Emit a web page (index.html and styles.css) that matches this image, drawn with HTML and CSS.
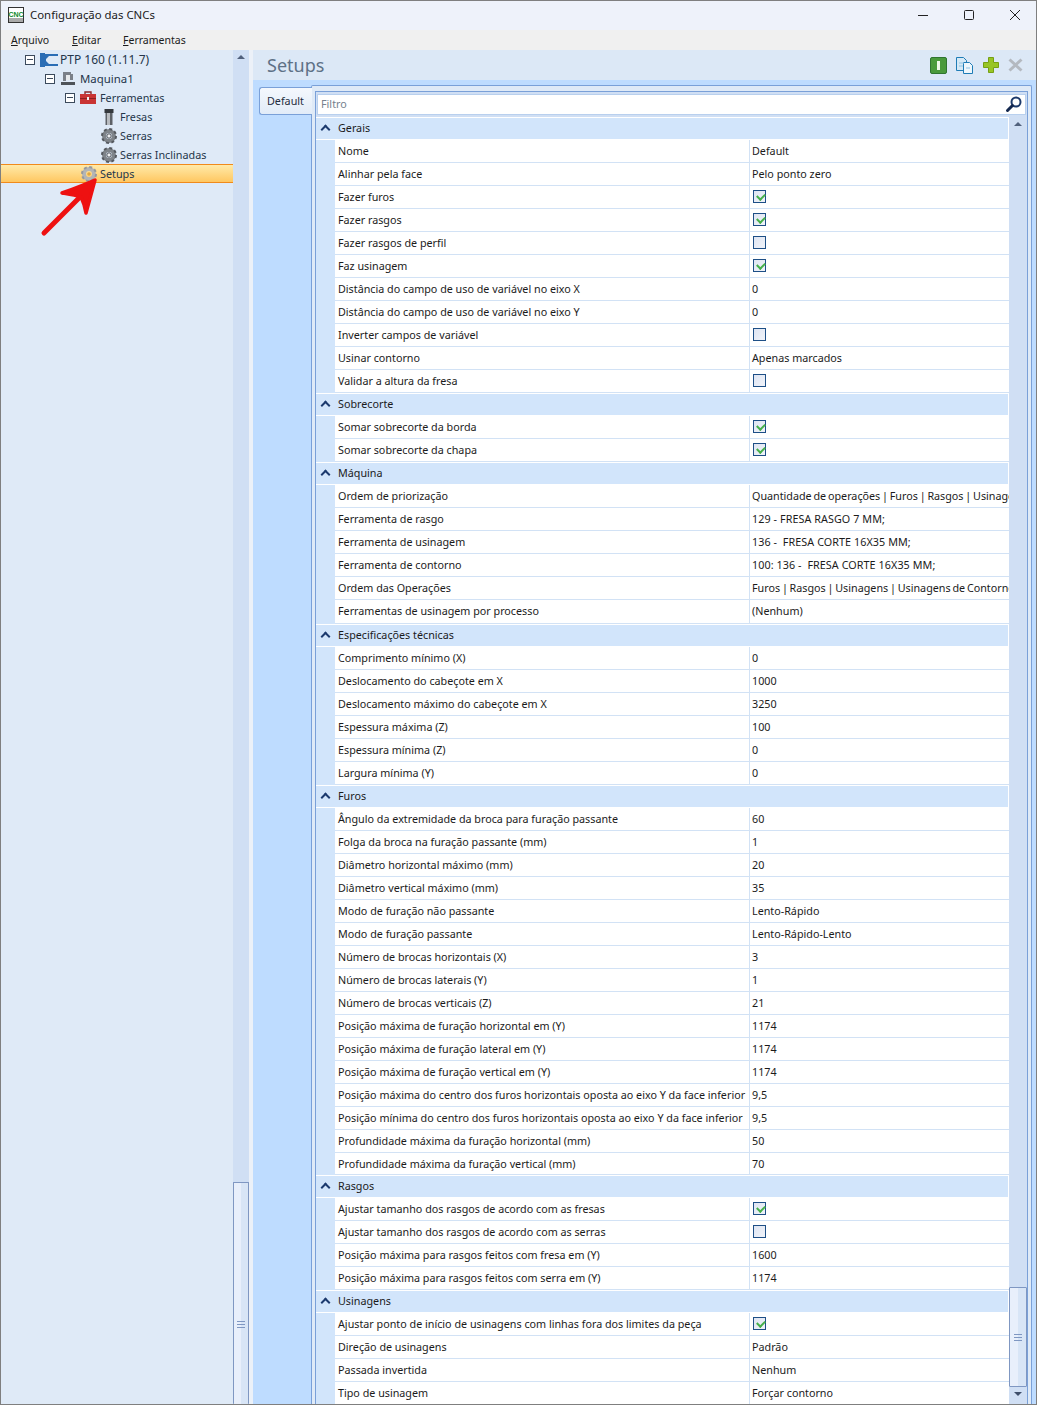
FILE: index.html
```html
<!DOCTYPE html>
<html lang="pt">
<head>
<meta charset="utf-8">
<title>Configuração das CNCs</title>
<link rel="stylesheet" href="styles.css">
</head>
<body>
<div class="window">
  <header class="titlebar">
    <svg class="app-icon" width="16" height="16" viewBox="0 0 16 16"><rect x=".5" y=".5" width="15" height="15" fill="#fff" stroke="#333"/><rect x="1" y="11" width="14" height="4" fill="#aaa"/><text x="8" y="10" text-anchor="middle" class="app-icon-text">CNC</text></svg>
    <span class="title">Configuração das CNCs</span>
    <div class="winctl">
      <svg width="12" height="12" viewBox="0 0 12 12"><path d="M1 6.5h10" stroke="#222" fill="none"/></svg>
      <svg width="12" height="12" viewBox="0 0 12 12"><rect x="1.5" y="1.5" width="9" height="9" rx="1" stroke="#222" fill="none"/></svg>
      <svg width="12" height="12" viewBox="0 0 12 12"><path d="M1 1l10 10M11 1L1 11" stroke="#222" fill="none"/></svg>
    </div>
  </header>
  <nav class="menubar">
    <span class="menu"><u>A</u>rquivo</span>
    <span class="menu"><u>E</u>ditar</span>
    <span class="menu"><u>F</u>erramentas</span>
  </nav>
  <div class="main">
    <aside class="tree">
      <div class="node lv1"><span class="exp"></span>
        <svg class="ico" width="18" height="14" viewBox="0 0 18 14"><path d="M0 0h5v14H0z" fill="#2a6db5"/><path d="M5 1h13v2H9L6 6v2l3 3h9v2H5z" fill="#2a6db5"/></svg>
        <span class="lbl">PTP 160 (1.11.7)</span></div>
      <div class="node lv2"><span class="exp"></span>
        <svg class="ico" width="16" height="16" viewBox="0 0 16 16"><path d="M3 1h8v2h2v6h-3V4H6v6H3z" fill="#7b8088"/><path d="M1 11h14v3H1z" fill="#4d5258"/><path d="M6 4h4v5H6z" fill="#e8eaec"/></svg>
        <span class="lbl">Maquina1</span></div>
      <div class="node lv3"><span class="exp"></span>
        <svg class="ico" width="16" height="14" viewBox="0 0 16 14"><path d="M5 3V1h6v2" fill="none" stroke="#8b2a2a" stroke-width="1.4"/><path d="M0 3h16v10H0z" fill="#c93434"/><path d="M0 7h16v1H0z" fill="#8e1f1f"/><path d="M7 6h2v3H7z" fill="#eee"/></svg>
        <span class="lbl">Ferramentas</span></div>
      <div class="node lv4">
        <svg class="ico" width="16" height="16" viewBox="0 0 16 16"><path d="M3.500 0h9v4h-9z" fill="#35393d"/><path d="M4.500 4h7v12h-7z" fill="#5d6166"/><path d="M6 4h3v12H6z" fill="#b9bcc0"/></svg>
        <span class="lbl">Fresas</span></div>
      <div class="node lv4">
        <svg class="ico" width="16" height="16" viewBox="0 0 16 16"><circle cx="8" cy="8" r="5" fill="none" stroke="#7f8489" stroke-width="4"/><circle cx="8" cy="8" r="7" fill="none" stroke="#55595f" stroke-width="2" stroke-dasharray="3 2.5"/><circle cx="8" cy="8" r="2.200" fill="#eef0f2" stroke="#4b4f55"/></svg>
        <span class="lbl">Serras</span></div>
      <div class="node lv4">
        <svg class="ico" width="16" height="16" viewBox="0 0 16 16"><circle cx="8" cy="8" r="5" fill="none" stroke="#7f8489" stroke-width="4"/><circle cx="8" cy="8" r="7" fill="none" stroke="#55595f" stroke-width="2" stroke-dasharray="3 2.5"/><circle cx="8" cy="8" r="2.200" fill="#eef0f2" stroke="#4b4f55"/></svg>
        <span class="lbl">Serras Inclinadas</span></div>
      <div class="node lv3 selected">
        <svg class="ico" width="16" height="16" viewBox="0 0 16 16"><circle cx="8" cy="8" r="5" fill="none" stroke="#b3b5b6" stroke-width="4"/><circle cx="8" cy="8" r="7" fill="none" stroke="#97999c" stroke-width="2" stroke-dasharray="3 2.5"/><circle cx="8" cy="8" r="1.800" fill="#e0a640"/></svg>
        <span class="lbl">Setups</span></div>
    </aside>
    <div class="vscroll tree-scroll">
      <span class="arrow-up"></span>
      <span class="track"></span>
      <div class="thumb tree-thumb"><span class="grip"></span></div>
    </div>
    <div class="splitter"></div>
    <section class="right">
      <div class="head">
        <h1 class="head-title">Setups</h1>
        <div class="tools">
          <svg width="17" height="17" viewBox="0 0 17 17"><rect x=".5" y=".5" width="16" height="16" rx="1.5" fill="#4a9a3c" stroke="#2f7530"/><path d="M7 4h3v9H7z" fill="#eef7ea"/></svg>
          <svg width="18" height="17" viewBox="0 0 18 17"><path d="M.5.5h7l3 3v10H.5z" fill="#d5e9f6" stroke="#1f7cb6"/><path d="M7.5 5.5h6l3 3v8h-9z" fill="#eef7fc" stroke="#1f7cb6"/><path d="M3 6h5M3 9h4M10 11h4" stroke="#8fc2e2"/></svg>
          <svg width="16" height="16" viewBox="0 0 16 16"><path d="M5.500.500h5v5h5v5h-5v5h-5v-5h-5v-5h5z" fill="#98c525" stroke="#76a012"/></svg>
          <svg class="tool-x" width="15" height="14" viewBox="0 0 15 14"><path d="M1.500 1.500l12 11M13.500 1.500l-12 11" stroke="#b4b9c0" stroke-width="3" fill="none"/></svg>
        </div>
      </div>
      <div class="tabarea">
        <div class="tab">Default</div>
        <div class="tabpage">
          <div class="inner">
            <div class="filter"><span class="filter-text">Filtro</span>
              <svg width="18" height="18" viewBox="0 0 18 18"><circle cx="11" cy="7" r="4.500" fill="#fff" stroke="#1d3a6b" stroke-width="2"/><path d="M7.500 10.500L2.500 15.500" stroke="#14284f" stroke-width="3" stroke-linecap="round"/></svg>
            </div>
            <div class="gridwrap">
              <div class="grid">
                <div class="group">
                  <div class="ghead">Gerais</div>
                  <div class="row"><div class="name">Nome</div><div class="value">Default</div></div>
                  <div class="row"><div class="name">Alinhar pela face</div><div class="value">Pelo ponto zero</div></div>
                  <div class="row"><div class="name">Fazer furos</div><div class="value"><span class="check on"></span></div></div>
                  <div class="row"><div class="name">Fazer rasgos</div><div class="value"><span class="check on"></span></div></div>
                  <div class="row"><div class="name">Fazer rasgos de perfil</div><div class="value"><span class="check"></span></div></div>
                  <div class="row"><div class="name">Faz usinagem</div><div class="value"><span class="check on"></span></div></div>
                  <div class="row"><div class="name">Distância do campo de uso de variável no eixo X</div><div class="value">0</div></div>
                  <div class="row"><div class="name">Distância do campo de uso de variável no eixo Y</div><div class="value">0</div></div>
                  <div class="row"><div class="name">Inverter campos de variável</div><div class="value"><span class="check"></span></div></div>
                  <div class="row"><div class="name">Usinar contorno</div><div class="value">Apenas marcados</div></div>
                  <div class="row"><div class="name">Validar a altura da fresa</div><div class="value"><span class="check"></span></div></div>
                </div>
                <div class="group">
                  <div class="ghead">Sobrecorte</div>
                  <div class="row"><div class="name">Somar sobrecorte da borda</div><div class="value"><span class="check on"></span></div></div>
                  <div class="row"><div class="name">Somar sobrecorte da chapa</div><div class="value"><span class="check on"></span></div></div>
                </div>
                <div class="group">
                  <div class="ghead">Máquina</div>
                  <div class="row"><div class="name">Ordem de priorização</div><div class="value value-list">Quantidade de operações | Furos | Rasgos | Usinagens</div></div>
                  <div class="row"><div class="name">Ferramenta de rasgo</div><div class="value value-caps">129 - FRESA RASGO 7 MM;</div></div>
                  <div class="row"><div class="name">Ferramenta de usinagem</div><div class="value value-caps">136 -  FRESA CORTE 16X35 MM;</div></div>
                  <div class="row"><div class="name">Ferramenta de contorno</div><div class="value value-caps">100: 136 -  FRESA CORTE 16X35 MM;</div></div>
                  <div class="row"><div class="name">Ordem das Operações</div><div class="value value-list">Furos | Rasgos | Usinagens | Usinagens de Contorno</div></div>
                  <div class="row row-tall"><div class="name">Ferramentas de usinagem por processo</div><div class="value">(Nenhum)</div></div>
                </div>
                <div class="group">
                  <div class="ghead">Especificações técnicas</div>
                  <div class="row"><div class="name">Comprimento mínimo (X)</div><div class="value">0</div></div>
                  <div class="row"><div class="name">Deslocamento do cabeçote em X</div><div class="value">1000</div></div>
                  <div class="row"><div class="name">Deslocamento máximo do cabeçote em X</div><div class="value">3250</div></div>
                  <div class="row"><div class="name">Espessura máxima (Z)</div><div class="value">100</div></div>
                  <div class="row"><div class="name">Espessura mínima (Z)</div><div class="value">0</div></div>
                  <div class="row"><div class="name">Largura mínima (Y)</div><div class="value">0</div></div>
                </div>
                <div class="group">
                  <div class="ghead">Furos</div>
                  <div class="row"><div class="name">Ângulo da extremidade da broca para furação passante</div><div class="value">60</div></div>
                  <div class="row"><div class="name">Folga da broca na furação passante (mm)</div><div class="value">1</div></div>
                  <div class="row"><div class="name">Diâmetro horizontal máximo (mm)</div><div class="value">20</div></div>
                  <div class="row"><div class="name">Diâmetro vertical máximo (mm)</div><div class="value">35</div></div>
                  <div class="row"><div class="name">Modo de furação não passante</div><div class="value">Lento-Rápido</div></div>
                  <div class="row"><div class="name">Modo de furação passante</div><div class="value">Lento-Rápido-Lento</div></div>
                  <div class="row"><div class="name">Número de brocas horizontais (X)</div><div class="value">3</div></div>
                  <div class="row"><div class="name">Número de brocas laterais (Y)</div><div class="value">1</div></div>
                  <div class="row"><div class="name">Número de brocas verticais (Z)</div><div class="value">21</div></div>
                  <div class="row"><div class="name">Posição máxima de furação horizontal em (Y)</div><div class="value">1174</div></div>
                  <div class="row"><div class="name">Posição máxima de furação lateral em (Y)</div><div class="value">1174</div></div>
                  <div class="row"><div class="name">Posição máxima de furação vertical em (Y)</div><div class="value">1174</div></div>
                  <div class="row"><div class="name">Posição máxima do centro dos furos horizontais oposta ao eixo Y da face inferior</div><div class="value">9,5</div></div>
                  <div class="row"><div class="name">Posição mínima do centro dos furos horizontais oposta ao eixo Y da face inferior</div><div class="value">9,5</div></div>
                  <div class="row"><div class="name">Profundidade máxima da furação horizontal (mm)</div><div class="value">50</div></div>
                  <div class="row row-short"><div class="name">Profundidade máxima da furação vertical (mm)</div><div class="value">70</div></div>
                </div>
                <div class="group">
                  <div class="ghead">Rasgos</div>
                  <div class="row"><div class="name">Ajustar tamanho dos rasgos de acordo com as fresas</div><div class="value"><span class="check on"></span></div></div>
                  <div class="row"><div class="name">Ajustar tamanho dos rasgos de acordo com as serras</div><div class="value"><span class="check"></span></div></div>
                  <div class="row"><div class="name">Posição máxima para rasgos feitos com fresa em (Y)</div><div class="value">1600</div></div>
                  <div class="row"><div class="name">Posição máxima para rasgos feitos com serra em (Y)</div><div class="value">1174</div></div>
                </div>
                <div class="group">
                  <div class="ghead">Usinagens</div>
                  <div class="row"><div class="name">Ajustar ponto de início de usinagens com linhas fora dos limites da peça</div><div class="value"><span class="check on"></span></div></div>
                  <div class="row"><div class="name">Direção de usinagens</div><div class="value">Padrão</div></div>
                  <div class="row"><div class="name">Passada invertida</div><div class="value">Nenhum</div></div>
                  <div class="row"><div class="name">Tipo de usinagem</div><div class="value">Forçar contorno</div></div>
                </div>
              </div>
              <div class="vscroll grid-scroll">
                <span class="arrow-up"></span>
                <span class="track"></span>
                <div class="thumb grid-thumb"><span class="grip"></span></div>
                <span class="arrow-down"></span>
              </div>
            </div>
          </div>
        </div>
      </div>
    </section>
  </div>
  <svg class="red-arrow" width="70" height="72" viewBox="0 0 70 72"><path d="M7 65L42 30" stroke="#ee1111" stroke-width="5" stroke-linecap="round" fill="none"/><path d="M25 25C36 21 47 17 58 12C55 23 52 34 49 45C48 39 46 33 44 29C38 27 31 26 25 25Z" fill="#ee1111" stroke="#ee1111" stroke-width="3.500" stroke-linejoin="round"/></svg>
</div>
</body>
</html>
```
FILE: styles.css
```css
* { box-sizing: border-box; }
html, body { margin: 0; padding: 0; height: 100%; overflow: hidden; }
body { font-family: "Noto Sans", "Open Sans", sans-serif; font-size: 10.75px; color: #1b1b1b; background: #dfeaf7; }
.window { position: relative; width: 1037px; height: 1405px; border: 1px solid #7f7f7f; display: flex; flex-direction: column; overflow: hidden; background: #dfeaf7; }

.titlebar { height: 29px; flex: none; display: flex; align-items: center; padding: 0 0 2px 7px; background: #eef2fa; }
.app-icon { flex: none; }
.app-icon-text { font-family: "Liberation Sans", sans-serif; font-size: 7px; font-weight: 700; fill: #0d8a2a; }
.title { margin-left: 6px; font-size: 11.4px; }
.winctl { margin-left: auto; display: flex; gap: 34px; padding-right: 15px; }

.menubar { height: 20px; flex: none; display: flex; align-items: center; padding-left: 10px; background: #f0f0f0; font-size: 10.5px; }
.menu:nth-child(1) { width: 61px; }
.menu:nth-child(2) { width: 51px; }

.main { flex: 1; display: flex; min-height: 0; }
.tree { width: 232px; flex: none; background: #dfeaf7; font-size: 10.8px; }
.node { height: 19px; display: flex; align-items: center; }
.lv1 { padding-left: 24px; font-size: 12px; }
.lv2 { padding-left: 44px; font-size: 11.4px; }
.lv3 { padding-left: 64px; }
.lv4 { padding-left: 100px; }
.selected { padding-left: 80px; background: linear-gradient(#ffeaa9, #ffc761); border-top: 1px solid #f08a1c; border-bottom: 1px solid #f08a1c; }
.exp { position: relative; width: 10px; height: 10px; flex: none; border: 1px solid #3b4a5c; background: #fff; margin-right: 5px; }
.exp::after { content: ""; position: absolute; left: 1px; top: 3px; width: 6px; height: 2px; background: linear-gradient(#3b4a5c 50%, transparent 50%); }
.ico { flex: none; }
.lbl { white-space: nowrap; color: #25364a; margin-left: 3px; }
.lv1 .lbl { margin-left: 2px; }
.lv2 .lbl { margin-left: 4px; }
.lv3 .lbl { margin-left: 4px; }
.lv3.selected .lbl { margin-left: 3px; }

.vscroll { display: flex; flex-direction: column; flex: none; background: #d0dff4; }
.tree-scroll { width: 16px; }
.track { flex: none; }
.tree-scroll .track { height: 1118px; }
.arrow-up, .arrow-down { flex: none; height: 14px; display: flex; align-items: center; justify-content: center; }
.arrow-up::before { content: ""; border-left: 4px solid transparent; border-right: 4px solid transparent; border-bottom: 4px solid #51617c; }
.arrow-down::before { content: ""; border-left: 4px solid transparent; border-right: 4px solid transparent; border-top: 4px solid #3f4f6a; }
.thumb { flex: none; display: flex; flex-direction: column; align-items: center; border: 1px solid #7f97c2; border-radius: 1px; background: linear-gradient(90deg, #e8effb 50%, #d8e5f6 50%); }
.tree-thumb { flex: 1; padding-top: 138px; border-bottom: none; }
.grip { width: 8px; height: 7px; flex: none; background: repeating-linear-gradient(#7f97c2 0 1px, transparent 1px 3px); }
.splitter { width: 4px; flex: none; background: #ecf1f8; }

.right { flex: 1; min-width: 0; display: flex; flex-direction: column; }
.head { height: 30px; flex: none; display: flex; align-items: center; background: #dce8f6; padding-left: 14px; }
.head-title { margin: 0; font-size: 18px; font-weight: 400; color: #5e7186; }
.tools { margin-left: auto; display: flex; align-items: center; gap: 9px; padding-right: 13px; }

.tabarea { flex: 1; min-height: 0; display: flex; align-items: flex-start; background: #bedcff; padding: 5px 4px 0 6px; }
.tab { width: 53px; height: 28px; margin-top: 2px; margin-right: -1px; position: relative; z-index: 1; padding: 6px 0 0 7px; background: linear-gradient(#f4f8fd, #e2ecf8); border: 1px solid #7aa0d8; border-right: none; border-radius: 3px 0 0 3px; color: #1f2d40; }
.tabpage { flex: 1; align-self: stretch; min-width: 0; background: #dfeaf7; border: 1px solid #7aa0d8; border-bottom: none; border-radius: 2px 2px 0 0; padding: 5px 3px 0; display: flex; }
.inner { flex: 1; min-width: 0; border: 1px solid #7aa0d8; border-bottom: none; padding-top: 2px; display: flex; flex-direction: column; background: #d0dff4; }
.filter { height: 21px; flex: none; margin: 0 1px 2px; display: flex; align-items: center; justify-content: space-between; padding: 0 2px 1px 3px; background: #fff; border: 1px solid #b9d0ee; }
.filter-text { color: #76818e; }

.gridwrap { flex: 1; min-height: 0; display: flex; }
.grid { flex: 1; min-width: 0; background: #d2e5fb; overflow: hidden; }
.group { padding-left: 19px; }
.ghead { position: relative; height: 23px; margin-left: -19px; padding-left: 22px; line-height: 21px; background: #d2e5fb; border-top: 1px solid #fff; border-bottom: 1px solid #fff; border-right: 1px solid #fff; white-space: nowrap; }
.ghead::before { content: ""; position: absolute; left: 6px; top: 8px; width: 5px; height: 5px; border-left: 2px solid #1c3a6e; border-top: 2px solid #1c3a6e; transform: rotate(45deg); }
.row { height: 23px; display: flex; background: #fff; border-bottom: 1px solid #d2e2f5; }
.row-tall { height: 24px; }
.row-short { height: 22px; }
.name { width: 415px; flex: none; padding-left: 3px; line-height: 22px; border-right: 1px solid #d2e2f5; white-space: nowrap; overflow: hidden; }
.value { flex: 1; min-width: 0; padding-left: 2px; line-height: 22px; white-space: pre; overflow: hidden; display: flex; align-items: flex-start; }
.value-list { word-spacing: -1px; }
.value-caps { letter-spacing: .08px; }
.check { width: 13px; height: 13px; margin: 4px 0 0 1px; flex: none; position: relative; border: 1px solid #1e4f86; background: linear-gradient(135deg, #dfe5f2, #f0f3f9); }
.check.on::after { content: ""; position: absolute; left: 3px; top: 2px; width: 6px; height: 4px; border-left: 2px solid #46b04a; border-bottom: 2px solid #46b04a; transform: rotate(-45deg); }

.grid-scroll { width: 18px; }
.grid-scroll .track { height: 1156px; }
.grid-thumb { height: 100px; padding-top: 46px; }
.red-arrow { position: absolute; left: 36px; top: 167px; }
```
